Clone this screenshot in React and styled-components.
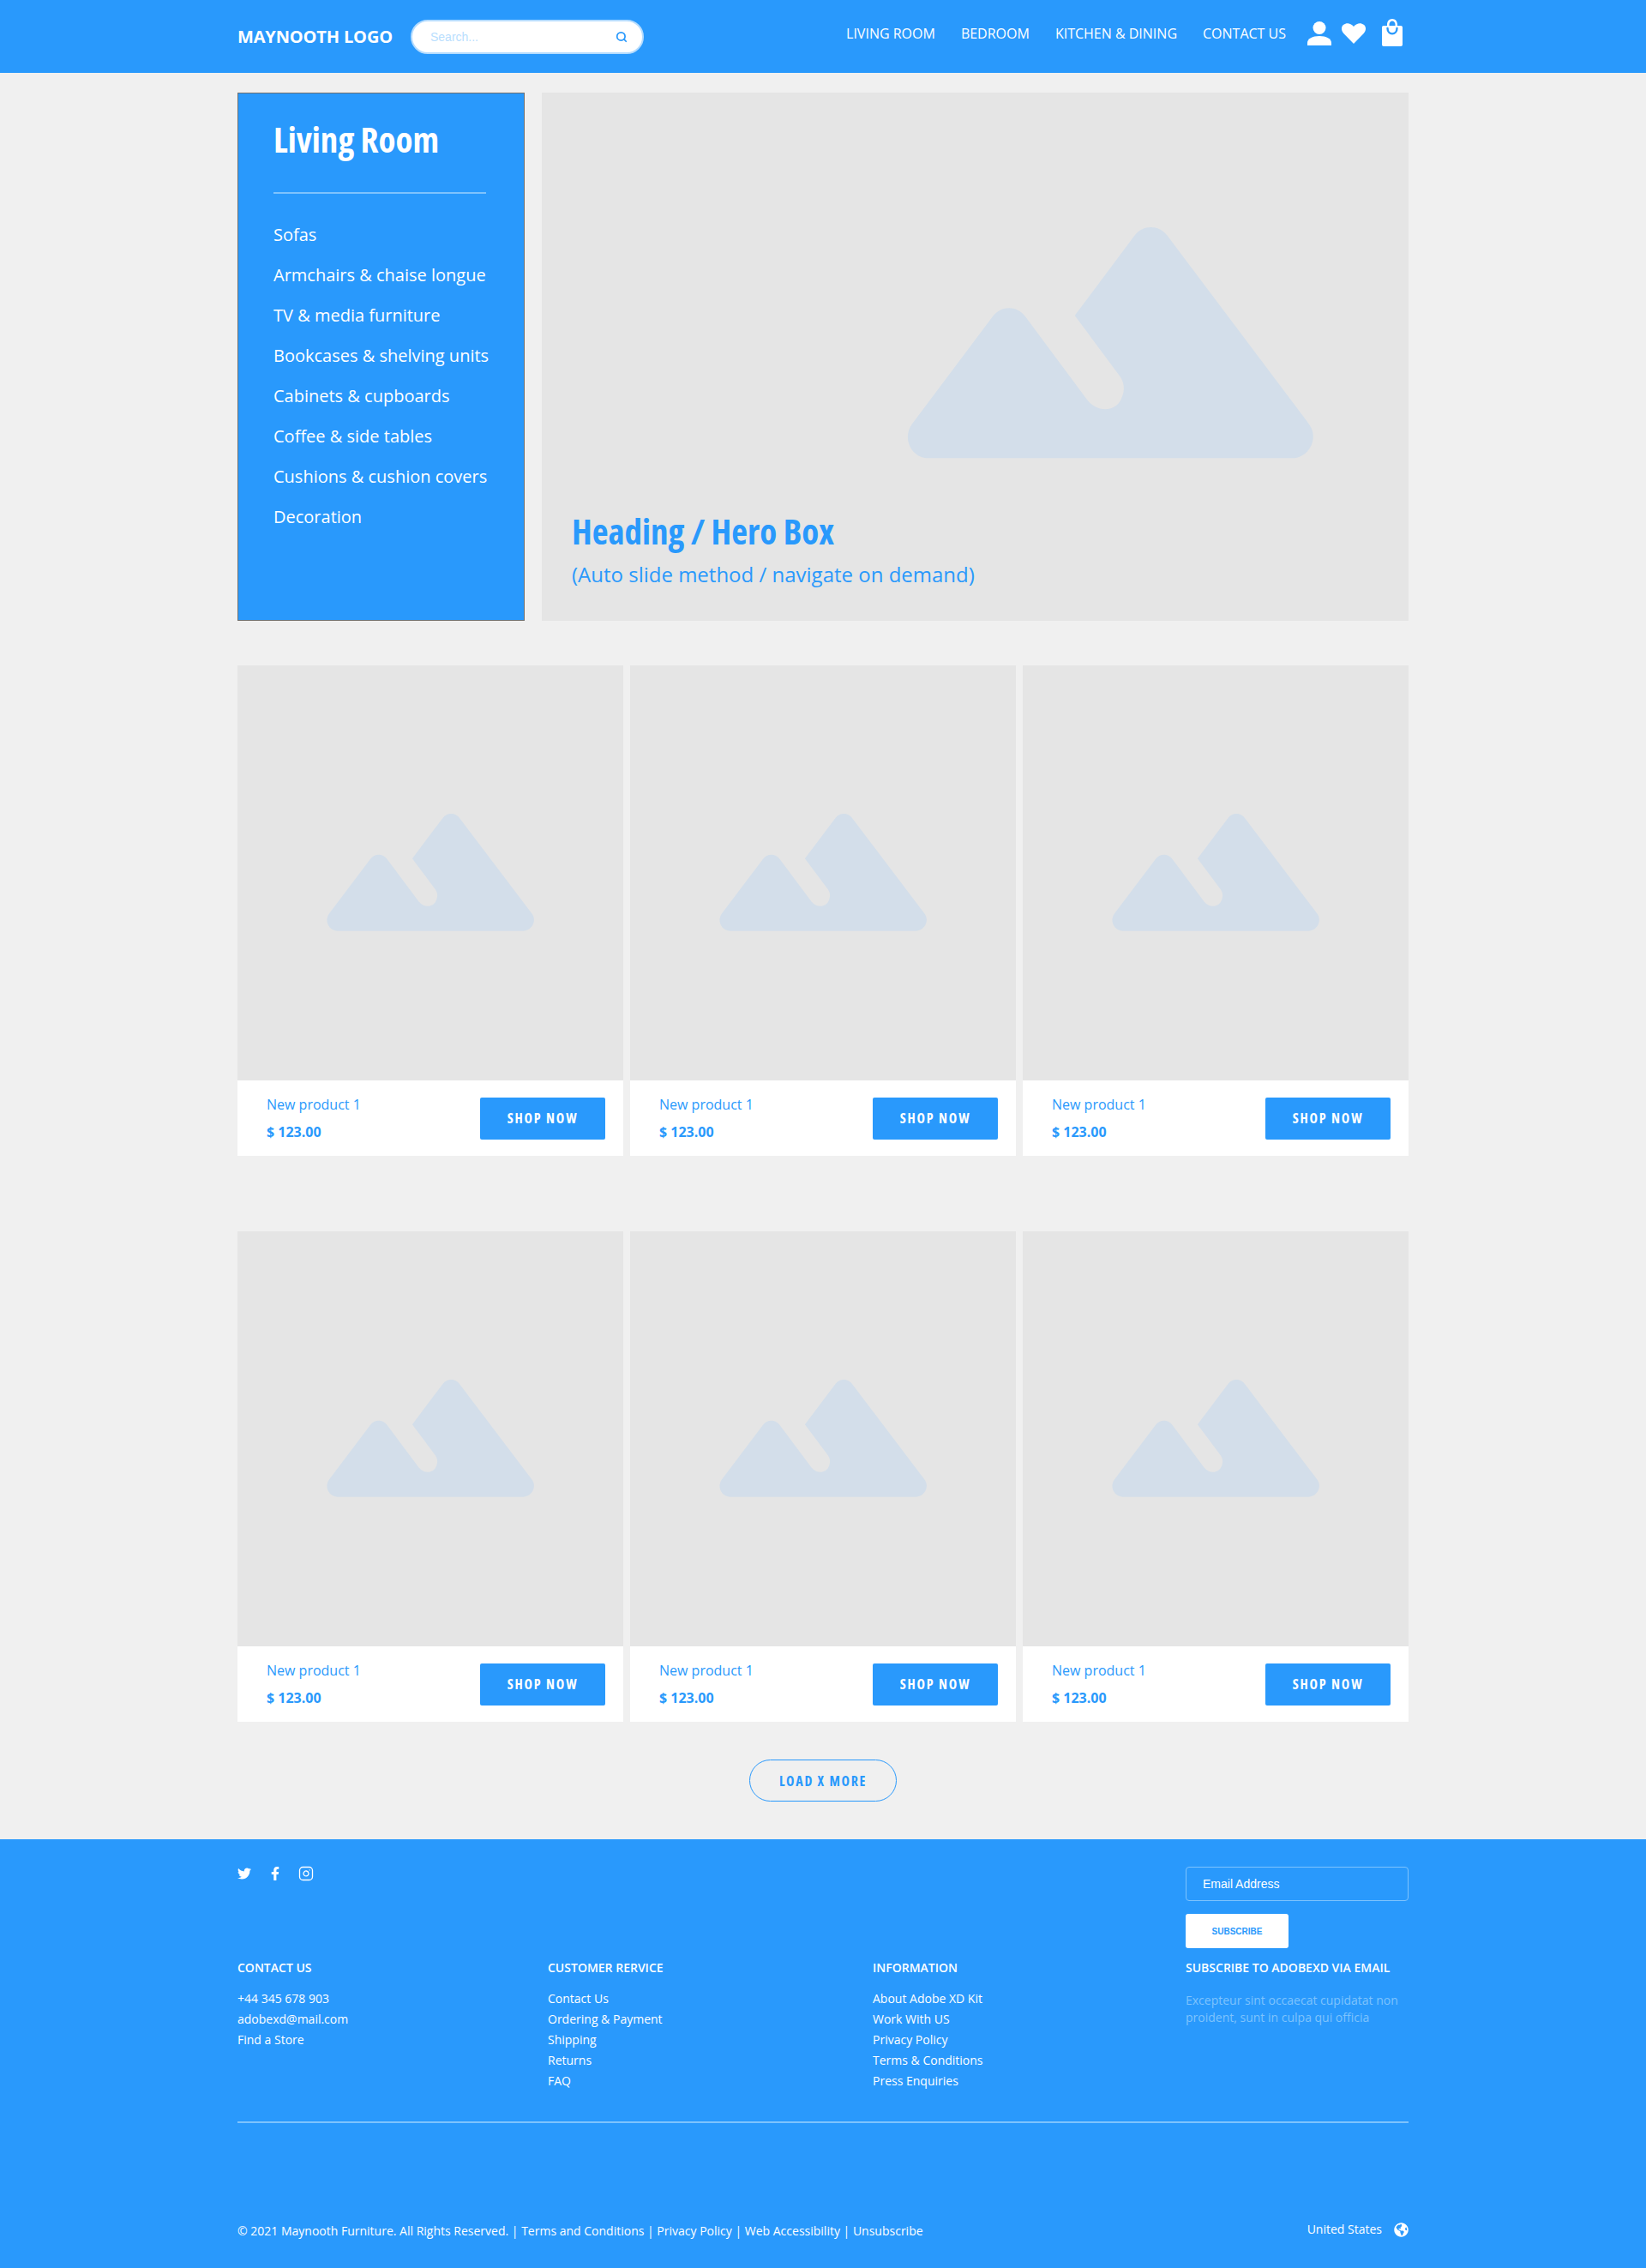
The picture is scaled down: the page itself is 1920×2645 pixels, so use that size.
import React from "react";
import styled, { createGlobalStyle } from "styled-components";
import { FaTwitter, FaFacebookF, FaGlobeAmericas } from "react-icons/fa";
import { FiSearch, FiInstagram } from "react-icons/fi";

const BLUE = "#2999fc";
const TINT = "#7ec3fd";

const GlobalStyle = createGlobalStyle`
  * { box-sizing: border-box; }
  body {
    margin: 0;
    background: #f0f0f0;
    font-family: "Open Sans", sans-serif;
    color: #fff;
  }
  a { color: inherit; text-decoration: none; }
  ul { list-style: none; margin: 0; padding: 0; }
`;

const Container = styled.div`
  width: 1366px;
  margin: 0 auto;
`;

/* header */
const HeaderBar = styled.header`
  height: 85px;
  background: ${BLUE};
`;
const HeaderInner = styled(Container)`
  height: 100%;
  display: flex;
  align-items: center;
`;
const Logo = styled.div`
  font-size: 20px;
  font-weight: 700;
  letter-spacing: -0.15px;
  white-space: nowrap;
  margin-right: 21px;
`;
const SearchBox = styled.div`
  width: 272px;
  height: 40px;
  padding: 0 17px 0 21px;
  display: flex;
  align-items: center;
  justify-content: space-between;
  background: #fff;
  border: 2px solid #b5dcfe;
  border-radius: 20px;
  color: ${BLUE};
`;
const SearchInput = styled.input`
  width: 160px;
  border: 0;
  outline: 0;
  padding: 0;
  font: 14px "Liberation Sans", sans-serif;
  &::placeholder { color: #b9defe; opacity: 1; }
`;
const Nav = styled.nav`
  margin-left: auto;
  padding-bottom: 7px;
  display: flex;
  gap: 30px;
  font-size: 16px;
`;
const HeaderIcons = styled.div`
  margin: 0 7px 0 25px;
  padding-bottom: 7px;
  display: flex;
  align-items: center;
  gap: 12px;
`;
const BagSvg = styled.svg`
  margin: 0 0 2px 7px;
`;

/* top area */
const TopRow = styled(Container)`
  margin-top: 23px;
  display: flex;
  gap: 20px;
  height: 616px;
`;
const SideMenu = styled.aside`
  width: 335px;
  padding: 26px 44px 0 41px;
  background: ${BLUE};
  border: 1px solid #707070;
`;
const Condensed = styled.div`
  font-family: "Open Sans", sans-serif;
  font-stretch: 75%;
  font-weight: 700;
`;
const SideTitle = styled(Condensed)`
  font-size: 41px;
  line-height: 54px;
  padding-bottom: 35px;
  border-bottom: 2px solid ${TINT};
`;
const SideList = styled.ul`
  margin-top: 24px;
  font-size: 20px;
  line-height: 47px;
  white-space: nowrap;
`;
const Hero = styled.section`
  flex: 1;
  padding: 0 35px 38px;
  background: #e5e5e5;
  color: ${BLUE};
  display: flex;
  flex-direction: column;
  justify-content: flex-end;
  position: relative;
`;
const HeroIcon = styled.svg`
  position: absolute;
  left: 426px;
  top: 157px;
  width: 474px;
  height: 270px;
`;
const HeroTitle = styled(Condensed)`
  font-size: 41px;
  line-height: 54px;
`;
const HeroSub = styled.div`
  font-size: 24px;
  line-height: 33px;
  margin-top: 7px;
`;

/* products */
const ProductRow = styled(Container)`
  margin-top: ${(p) => p.$top}px;
  display: grid;
  grid-template-columns: repeat(3, 450px);
  column-gap: 8px;
`;
const Card = styled.article`
  background: #fff;
  color: ${BLUE};
`;
const CardImage = styled.div`
  height: 484px;
  padding-bottom: 2px;
  background: #e5e5e5;
  display: flex;
  align-items: center;
  justify-content: center;
`;
const MountainSmall = styled.svg`
  width: 242px;
  height: 137px;
`;
const CardInfo = styled.div`
  height: 88px;
  padding: 0 21px 0 34px;
  display: flex;
  align-items: center;
  justify-content: space-between;
`;
const ProductName = styled.div`
  font-size: 16px;
  line-height: 22px;
`;
const ProductPrice = styled.div`
  font-size: 16px;
  font-weight: 700;
  line-height: 22px;
  margin-top: 10px;
`;
const ShopButton = styled.button`
  width: 146px;
  height: 49px;
  border: 0;
  border-radius: 2px;
  background: ${BLUE};
  color: #fff;
  font-family: "Open Sans", sans-serif;
  font-stretch: 75%;
  font-size: 16px;
  font-weight: 700;
  letter-spacing: 1.8px;
`;
const LoadWrap = styled.div`
  margin: 44px 0;
  display: flex;
  justify-content: center;
`;
const LoadButton = styled.button`
  width: 172px;
  height: 49px;
  background: transparent;
  border: 1px solid ${BLUE};
  border-radius: 25px;
  color: ${BLUE};
  font-family: "Open Sans", sans-serif;
  font-stretch: 75%;
  font-size: 16px;
  font-weight: 700;
  letter-spacing: 1.7px;
`;

/* footer */
const FooterBar = styled.footer`
  height: 500px;
  background: ${BLUE};
`;
const FooterGrid = styled(Container)`
  padding-top: 32px;
  display: grid;
  grid-template-columns: 362px 379px 365px 260px;
  align-content: start;
  border-bottom: 2px solid ${TINT};
  height: 331px;
`;
const Socials = styled.div`
  grid-column: 1 / 4;
  display: flex;
  align-items: flex-start;
  gap: 20px;
  font-size: 16px;
`;
const InstaIcon = styled(FiInstagram)`
  margin: -1px 0 0 -1px;
`;
const SubscribeForm = styled.div`
  display: flex;
  flex-direction: column;
  align-items: flex-start;
  gap: 15px;
`;
const EmailInput = styled.input`
  width: 260px;
  height: 40px;
  padding: 0 19px;
  background: transparent;
  border: 1px solid ${TINT};
  border-radius: 4px;
  color: #fff;
  outline: 0;
  font: 14px "Liberation Sans", sans-serif;
  &::placeholder { color: #fff; opacity: 1; }
`;
const SubscribeButton = styled.button`
  width: 120px;
  height: 40px;
  border: 0;
  border-radius: 3px;
  background: #fff;
  color: ${BLUE};
  font: 700 10px "Liberation Sans", sans-serif;
`;
const FooterCol = styled.div`
  margin-top: 13px;
`;
const ColTitle = styled.div`
  font-size: 14px;
  font-weight: 600;
  line-height: 20px;
  white-space: nowrap;
`;
const ColList = styled.ul`
  margin-top: 14px;
  font-size: 14px;
  line-height: 24px;
`;
const ColText = styled.p`
  margin: 18px 0 0;
  font-size: 14px;
  line-height: 20px;
  color: ${TINT};
`;
const BottomRow = styled(Container)`
  display: flex;
  justify-content: space-between;
  align-items: center;
  padding-top: 114px;
  font-size: 14px;
  line-height: 20px;
`;
const Region = styled.div`
  display: flex;
  align-items: center;
  gap: 14px;
  margin-bottom: 4px;
`;

function Mountain({ as: Svg }) {
  return (
    <Svg viewBox="0 0 474 270" preserveAspectRatio="none">
      <path
        fill="#d3deea"
        d="M195.7 103 L265.4 9.7 C275 -3.2 294 -3.2 303.6 9.7 L469 229.7 C481 246 469 269.3 449 269.3 L25 269.3 C5 269.3 -6 246 5.7 229.7 L100 104 C110 91 128 91 137.9 104 L210.7 202 C222 216 243 216 250 200 C254 191 254 183 249 174.7 Z"
      />
    </Svg>
  );
}

const UserIcon = () => (
  <svg width="28" height="28" viewBox="0 0 28 28" fill="#fff">
    <circle cx="14" cy="7.5" r="7.5" />
    <path d="M0 28 V25 C0 20 6 17 14 17 C22 17 28 20 28 25 V28 Z" />
  </svg>
);
const HeartIcon = () => (
  <svg width="28" height="24" viewBox="0 0 28 24" fill="#fff">
    <path d="M14 24 L2.3 12 C-0.8 8.8 -0.8 3.9 2.3 1.7 C5.6 -0.8 10.2 -0.4 14 3.9 C17.8 -0.4 22.4 -0.8 25.7 1.7 C28.8 3.9 28.8 8.8 25.7 12 Z" />
  </svg>
);
const BagIcon = () => (
  <BagSvg width="24" height="32" viewBox="0 0 24 32">
    <path
      fill="#fff"
      fillRule="evenodd"
      d="M6 8 V6.5 C6 2.8 8.6 0 12 0 C15.4 0 18 2.8 18 6.5 V8 H22 C23.2 8 24 8.8 24 10 V30 C24 31.2 23.2 32 22 32 H2 C0.8 32 0 31.2 0 30 V10 C0 8.8 0.8 8 2 8 Z M8.5 8 H15.5 V6.5 C15.5 4.2 14 2.5 12 2.5 C10 2.5 8.5 4.2 8.5 6.5 Z"
    />
    <path d="M6.5 11 C6.5 19.5 17.5 19.5 17.5 11" fill="none" stroke={BLUE} strokeWidth="2.4" strokeLinecap="round" />
  </BagSvg>
);

const sideItems = [
  "Sofas",
  "Armchairs & chaise longue",
  "TV & media furniture",
  "Bookcases & shelving units",
  "Cabinets & cupboards",
  "Coffee & side tables",
  "Cushions & cushion covers",
  "Decoration",
];
const serviceLinks = ["Contact Us", "Ordering & Payment", "Shipping", "Returns", "FAQ"];
const infoLinks = ["About Adobe XD Kit", "Work With US", "Privacy Policy", "Terms & Conditions", "Press Enquiries"];
const contactLinks = ["+44 345 678 903", "adobexd@mail.com", "Find a Store"];

const ProductCard = () => (
  <Card>
    <CardImage>
      <Mountain as={MountainSmall} />
    </CardImage>
    <CardInfo>
      <div>
        <ProductName>New product 1</ProductName>
        <ProductPrice>$ 123.00</ProductPrice>
      </div>
      <ShopButton>SHOP NOW</ShopButton>
    </CardInfo>
  </Card>
);

const Links = ({ items }) => (
  <ColList>
    {items.map((item) => (
      <li key={item}>{item}</li>
    ))}
  </ColList>
);

export default function App() {
  return (
    <>
      <GlobalStyle />
      <HeaderBar>
        <HeaderInner>
          <Logo>MAYNOOTH LOGO</Logo>
          <SearchBox>
            <SearchInput placeholder="Search..." />
            <FiSearch size={14} strokeWidth={3} />
          </SearchBox>
          <Nav>
            <a href="#living">LIVING ROOM</a>
            <a href="#bedroom">BEDROOM</a>
            <a href="#kitchen">KITCHEN &amp; DINING</a>
            <a href="#contact">CONTACT US</a>
          </Nav>
          <HeaderIcons>
            <UserIcon />
            <HeartIcon />
            <BagIcon />
          </HeaderIcons>
        </HeaderInner>
      </HeaderBar>

      <TopRow>
        <SideMenu>
          <SideTitle>Living Room</SideTitle>
          <SideList>
            {sideItems.map((item) => (
              <li key={item}>{item}</li>
            ))}
          </SideList>
        </SideMenu>
        <Hero>
          <Mountain as={HeroIcon} />
          <HeroTitle>Heading / Hero Box</HeroTitle>
          <HeroSub>(Auto slide method / navigate on demand)</HeroSub>
        </Hero>
      </TopRow>

      <ProductRow $top={52}>
        <ProductCard />
        <ProductCard />
        <ProductCard />
      </ProductRow>
      <ProductRow $top={88}>
        <ProductCard />
        <ProductCard />
        <ProductCard />
      </ProductRow>
      <LoadWrap>
        <LoadButton>LOAD X MORE</LoadButton>
      </LoadWrap>

      <FooterBar>
        <FooterGrid>
          <Socials>
            <FaTwitter />
            <FaFacebookF />
            <InstaIcon size={18} strokeWidth={1.7} />
          </Socials>
          <SubscribeForm>
            <EmailInput placeholder="Email Address" />
            <SubscribeButton>SUBSCRIBE</SubscribeButton>
          </SubscribeForm>
          <FooterCol>
            <ColTitle>CONTACT US</ColTitle>
            <Links items={contactLinks} />
          </FooterCol>
          <FooterCol>
            <ColTitle>CUSTOMER RERVICE</ColTitle>
            <Links items={serviceLinks} />
          </FooterCol>
          <FooterCol>
            <ColTitle>INFORMATION</ColTitle>
            <Links items={infoLinks} />
          </FooterCol>
          <FooterCol>
            <ColTitle>SUBSCRIBE TO ADOBEXD VIA EMAIL</ColTitle>
            <ColText>Excepteur sint occaecat cupidatat non proident, sunt in culpa qui officia</ColText>
          </FooterCol>
        </FooterGrid>
        <BottomRow>
          <div>© 2021 Maynooth Furniture. All Rights Reserved. | Terms and Conditions | Privacy Policy | Web Accessibility | Unsubscribe</div>
          <Region>
            United States
            <FaGlobeAmericas size={17} />
          </Region>
        </BottomRow>
      </FooterBar>
    </>
  );
}
